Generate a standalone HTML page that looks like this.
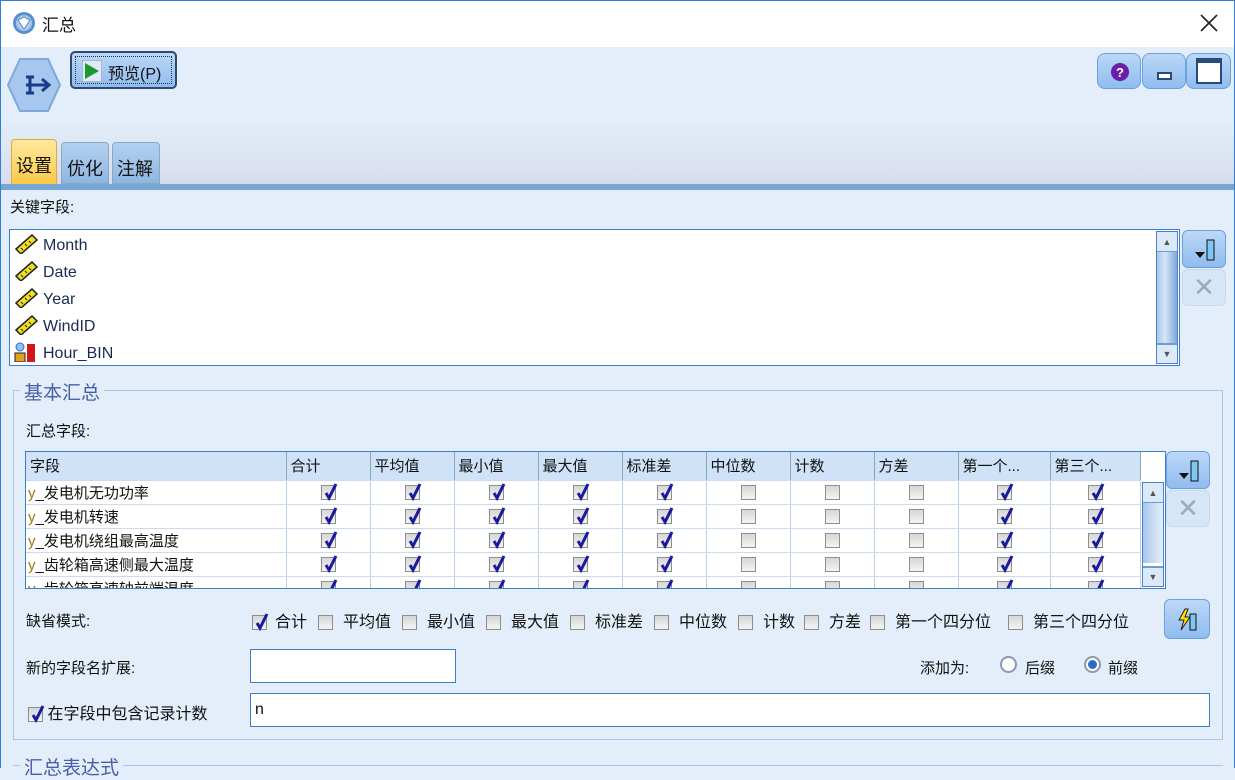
<!DOCTYPE html>
<html><head><meta charset="utf-8">
<style>
*{box-sizing:border-box;margin:0;padding:0}
body{width:1235px;height:768px;overflow:hidden;background:#e3eefa;font-family:"Liberation Sans","Noto Sans CJK SC",sans-serif;font-size:15px;color:#111;position:relative}
.a{position:absolute}
.cb{display:inline-block;width:15px;height:15px;border:1px solid #8e8e8e;background:linear-gradient(#d6d6d6,#f4f4f4);position:relative;vertical-align:middle}
.cb svg{position:absolute;left:1px;top:-3px}
table{border-collapse:collapse;table-layout:fixed}
td,th{height:24px;border-right:1px solid #b8d0ec;border-bottom:1px solid #c9dcf1;text-align:center;font-weight:normal;padding:0;overflow:hidden;white-space:nowrap}
th{background:#cfe2f8;text-align:left;padding-left:4px;border-right:1px solid #8aa;height:28px}
td.f{text-align:left;padding-left:2px}
.btn{border:1px solid #6fa0dc;border-radius:6px;background:linear-gradient(#bcd8f7,#8fbcef)}
.dm{position:absolute;top:608px;font-size:16px;white-space:nowrap}
</style></head><body>
<div class="a" style="left:0;top:0;width:1235px;height:768px;border-left:1px solid #2f7fd8;border-right:1px solid #2f7fd8;border-top:1px solid #2f7fd8;pointer-events:none;z-index:9"></div>
<div class="a" style="left:0;top:0;width:1235px;height:47px;background:#fff"></div>
<svg class="a" style="left:12px;top:11px" width="24" height="24" viewBox="0 0 24 24"><circle cx="12" cy="12" r="11" fill="#5a8fcf"/><circle cx="12" cy="12" r="8" fill="#a8c8ec"/><path d="M6 9l6-3 6 3-6 9z" fill="#fff" stroke="#5a8fcf"/></svg>
<div class="a" style="left:42px;top:11px;font-size:17px">汇总</div>
<svg class="a" style="left:1200px;top:14px" width="18" height="18"><path d="M1 1L17 17M17 1L1 17" stroke="#222" stroke-width="1.6"/></svg>
<svg class="a" style="left:6px;top:57px" width="56" height="62" viewBox="0 0 56 62"><polygon points="14,2 42,2 54,28 42,54 14,54 2,28" fill="#a7c7ee" stroke="#7ea8db" stroke-width="2"/><path d="M20 20h8M20 28h10M20 36h8M24 20v16" stroke="#1a3a8a" stroke-width="3"/><path d="M30 28h12M36 22l7 6-7 6" stroke="#1a3a8a" stroke-width="3" fill="none"/></svg>
<div class="a btn" style="left:70px;top:51px;width:107px;height:38px;border:2px solid #2e4a72;border-radius:5px"><div style="position:absolute;left:3px;top:3px;right:3px;bottom:3px;border:1px dotted #234"></div>
<svg class="a" style="left:10px;top:7px" width="20" height="22"><rect x="0" y="0" width="20" height="22" fill="#dfe9f7" stroke="#789"/><path d="M3 3l14 8-14 8z" fill="#1a9a2a"/></svg>
<span class="a" style="left:36px;top:7px;font-size:16px">预览(P)</span></div>
<div class="a btn" style="left:1097px;top:53px;width:44px;height:36px;border-radius:8px"><svg class="a" style="left:12px;top:8px" width="20" height="20"><circle cx="10" cy="10" r="9" fill="#6b1fa8"/><text x="10" y="15" font-size="13" font-weight="bold" fill="#fff" text-anchor="middle" font-family="Liberation Sans">?</text></svg></div>
<div class="a btn" style="left:1142px;top:53px;width:44px;height:36px;border-radius:8px"><div class="a" style="left:14px;top:18px;width:15px;height:8px;background:#fff;border:2px solid #2b4a7c"></div></div>
<div class="a btn" style="left:1186px;top:53px;width:45px;height:36px;border-radius:8px"><div class="a" style="left:9px;top:4px;width:26px;height:26px;background:#fff;border:2px solid #2b4a7c;border-top:5px solid #2b4a7c"></div></div>
<div class="a" style="left:0;top:120px;width:1235px;height:64px;background:linear-gradient(#e3eefa,#d7dcec)"></div>
<div class="a" style="left:11px;top:139px;width:46px;height:48px;background:linear-gradient(#ffe9a0,#fcc743);border:1px solid #e0a840;border-radius:4px 4px 0 0;font-size:18px;padding:12px 0 0 4px">设置</div>
<div class="a" style="left:61px;top:142px;width:48px;height:42px;background:linear-gradient(#b4d0f0,#8fb6e2);border:1px solid #8ab;border-radius:4px 4px 0 0;font-size:18px;padding:12px 0 0 5px">优化</div>
<div class="a" style="left:112px;top:142px;width:48px;height:42px;background:linear-gradient(#b4d0f0,#8fb6e2);border:1px solid #8ab;border-radius:4px 4px 0 0;font-size:18px;padding:12px 0 0 4px">注解</div>
<div class="a" style="left:0;top:184px;width:1235px;height:6px;background:#77a6d5"></div>
<div class="a" style="left:10px;top:196px">关键字段:</div>
<div class="a" style="left:9px;top:229px;width:1171px;height:137px;background:#fff;border:1px solid #3b7fd4">
<div style="position:absolute;left:3px;top:2px;line-height:27px;font-size:16px;color:#1a2a50">
<div><svg width="30" height="20" style="vertical-align:-4px"><path d="M3 15L19 1l5 5L8 20z" fill="#f0e020" stroke="#222" stroke-width="1.5"/><path d="M8 14l2 2M12 10l2 2M16 7l2 2" stroke="#222"/></svg>Month</div>
<div><svg width="30" height="20" style="vertical-align:-4px"><path d="M3 15L19 1l5 5L8 20z" fill="#f0e020" stroke="#222" stroke-width="1.5"/><path d="M8 14l2 2M12 10l2 2M16 7l2 2" stroke="#222"/></svg>Date</div>
<div><svg width="30" height="20" style="vertical-align:-4px"><path d="M3 15L19 1l5 5L8 20z" fill="#f0e020" stroke="#222" stroke-width="1.5"/><path d="M8 14l2 2M12 10l2 2M16 7l2 2" stroke="#222"/></svg>Year</div>
<div><svg width="30" height="20" style="vertical-align:-4px"><path d="M3 15L19 1l5 5L8 20z" fill="#f0e020" stroke="#222" stroke-width="1.5"/><path d="M8 14l2 2M12 10l2 2M16 7l2 2" stroke="#222"/></svg>WindID</div>
<div><svg width="30" height="20" style="vertical-align:-4px"><circle cx="7" cy="5" r="4" fill="#8cc4f0" stroke="#36c"/><rect x="2" y="11" width="10" height="9" fill="#e0a020" stroke="#222"/><rect x="14" y="2" width="8" height="18" fill="#d01818"/></svg>Hour_BIN</div>
</div>
<div class="a" style="right:1px;top:1px;width:22px;height:133px;background:linear-gradient(90deg,#a7c6ea,#d6e6f8 40%,#7ea7d6);border:1px solid #4a82cc"><div style="height:20px;background:#dbe9f8;border-bottom:1px solid #6d9bd2;text-align:center;font-size:9px;line-height:20px;color:#555">▲</div><div style="position:absolute;bottom:0;width:20px;height:20px;background:#dbe9f8;border-top:2px solid #6d9bd2;text-align:center;font-size:9px;line-height:18px;color:#555">▼</div></div>
</div>
<div class="a btn" style="left:1182px;top:230px;width:44px;height:38px"><svg class="a" style="left:10px;top:7px" width="24" height="24"><path d="M2 14h10l-5 6z" fill="#111"/><rect x="14" y="2" width="7" height="20" fill="#7cc8f0" stroke="#111"/></svg></div>
<div class="a" style="left:1182px;top:269px;width:44px;height:37px;border:1px solid #c5daf2;border-radius:6px;background:#d6e6f7;color:#9ab;font-size:26px;text-align:center;line-height:35px">✕</div>
<div class="a" style="left:13px;top:390px;width:1210px;height:350px;border:1px solid #a9c6e8"></div>
<div class="a" style="left:20px;top:378px;background:#e3eefa;padding:0 4px;font-size:19px;color:#4a5fa8">基本汇总</div>
<div class="a" style="left:26px;top:420px">汇总字段:</div>
<div class="a" style="left:25px;top:451px;width:1141px;height:138px;background:#fff;border:1px solid #3b7fd4;overflow:hidden">
<table style="width:1114px">
<colgroup><col style="width:260px"><col style="width:84px"><col style="width:84px"><col style="width:84px"><col style="width:84px"><col style="width:84px"><col style="width:84px"><col style="width:84px"><col style="width:84px"><col style="width:92px"><col style="width:90px"></colgroup>
<tr><th>字段</th><th>合计</th><th>平均值</th><th>最小值</th><th>最大值</th><th>标准差</th><th>中位数</th><th>计数</th><th>方差</th><th>第一个...</th><th>第三个...</th></tr>
<tbody id="tb"></tbody>
</table>
<div class="a" style="right:1px;top:30px;width:22px;height:105px;background:#fff;border:1px solid #4a82cc"><div style="height:20px;background:#dbe9f8;border-bottom:1px solid #6d9bd2;text-align:center;font-size:9px;line-height:20px;color:#555">▲</div><div style="height:60px;background:linear-gradient(90deg,#a7c6ea,#e6f0fb)"></div><div style="position:absolute;bottom:0;width:20px;height:20px;background:#dbe9f8;border-top:2px solid #6d9bd2;text-align:center;font-size:9px;line-height:18px;color:#555">▼</div></div>
</div>
<div class="a btn" style="left:1166px;top:451px;width:44px;height:38px"><svg class="a" style="left:10px;top:7px" width="24" height="24"><path d="M2 14h10l-5 6z" fill="#111"/><rect x="14" y="2" width="7" height="20" fill="#7cc8f0" stroke="#111"/></svg></div>
<div class="a" style="left:1166px;top:490px;width:44px;height:37px;border:1px solid #c5daf2;border-radius:6px;background:#d6e6f7;color:#9ab;font-size:26px;text-align:center;line-height:35px">✕</div>
<div class="a" style="left:26px;top:610px">缺省模式:</div>
<div id="dm"></div>
<div class="a btn" style="left:1164px;top:599px;width:46px;height:40px"><svg class="a" style="left:11px;top:8px" width="24" height="24"><path d="M9 1L3 12h5l-3 10 9-13H9l3-8z" fill="#ffe000" stroke="#222"/><rect x="14" y="6" width="6" height="16" fill="#7cc8f0" stroke="#111"/></svg></div>
<div class="a" style="left:26px;top:657px">新的字段名扩展:</div>
<div class="a" style="left:250px;top:649px;width:206px;height:34px;background:#fff;border:1px solid #3b7fd4"></div>
<div class="a" style="left:920px;top:657px">添加为:</div>
<div class="a" style="left:1000px;top:656px;width:17px;height:17px;border-radius:50%;border:2px solid #8a9ab0;background:#fff"></div>
<div class="a" style="left:1025px;top:657px">后缀</div>
<div class="a" style="left:1084px;top:656px;width:17px;height:17px;border-radius:50%;border:2px solid #8a9ab0;background:#fff"><div style="margin:2px;width:9px;height:9px;border-radius:50%;background:#2a6cc8"></div></div>
<div class="a" style="left:1108px;top:657px">前缀</div>
<div class="a" style="left:28px;top:700px;font-size:16px"><span class="cb"><svg width="16" height="18"><path d="M3 10l3 5 7-14" stroke="#1a1aa0" stroke-width="3" fill="none"/></svg></span> 在字段中包含记录计数</div>
<div class="a" style="left:250px;top:693px;width:960px;height:34px;background:#fff;border:1px solid #3b7fd4;padding:7px 4px;font-size:16px">n</div>
<div class="a" style="left:13px;top:765px;width:1210px;height:10px;border-top:1px solid #a9c6e8"></div>
<div class="a" style="left:20px;top:753px;background:#e3eefa;padding:0 4px;font-size:19px;color:#4a5fa8">汇总表达式</div>
<script>
var on='<span class="cb"><svg width="16" height="18"><path d="M3 10l3 5 7-14" stroke="#1a1aa0" stroke-width="3" fill="none"/></svg></span>';
var off='<span class="cb"></span>';
var rows=["y_发电机无功功率","y_发电机转速","y_发电机绕组最高温度","y_齿轮箱高速侧最大温度","y_齿轮箱高速轴前端温度"];
var pat=[1,1,1,1,1,0,0,0,1,1],h="";
rows.forEach(function(r){h+='<tr><td class="f"><span style="color:#a07810">y</span>'+r.slice(1)+'</td>';pat.forEach(function(p){h+='<td>'+(p?on:off)+'</td>'});h+='</tr>';});
document.getElementById('tb').innerHTML=h;
var d=["合计","平均值","最小值","最大值","标准差","中位数","计数","方差","第一个四分位","第三个四分位"],s="";
var xs=[252,318,402,486,570,654,738,804,870,1008];
d.forEach(function(t,i){s+='<div class="dm" style="left:'+xs[i]+'px">'+(i?off:on)+'<span style="margin-left:'+(i?10:8)+'px">'+t+'</span></div>'});
document.getElementById('dm').innerHTML=s;
</script>
</body></html>
